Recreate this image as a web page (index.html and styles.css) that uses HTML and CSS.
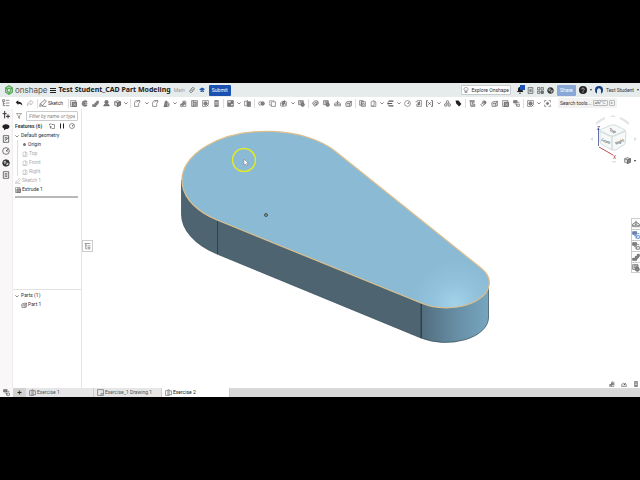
FILE: index.html
```html
<!DOCTYPE html>
<html lang="en">
<head>
    <meta charset="utf-8">
    <meta name="viewport" content="width=device-width, initial-scale=1.0">
    <title>Test Student_CAD Part Modeling</title>
    <link rel="stylesheet" href="styles.css">
</head>
<body>
<!-- shared icons, all drawn on a 12x12 grid -->
<svg class="defs" aria-hidden="true">
    <symbol id="tree" viewBox="0 0 12 12"><path d="M1 1h3v3H1zM2 4v6h3M2 7h3M6 2h5M6 6h5M6 10h5"/></symbol>
    <symbol id="outline" viewBox="0 0 12 12"><path d="M1 1h10M3 1v9h2M3 5h2M6 5h5M6 8h5M6 10h5"/></symbol>
    <symbol id="undo" viewBox="0 0 12 12"><path class="solid" d="M1 5l4-3v2c4 0 6 2 6 6-1-2-3-3-6-3v2z"/></symbol>
    <symbol id="redo" viewBox="0 0 12 12"><path d="M11 5L7 2v2C4 4 2 6 2 10c1-2 2-3 5-3v2z"/></symbol>
    <symbol id="pencil" viewBox="0 0 12 12"><path d="M1 11l1-4 7-6 2 2-6 7zM2 7l3 3M5 11h6"/></symbol>
    <symbol id="extrude" viewBox="0 0 12 12"><path class="pale" d="M4 4h7v7H4z"/><path d="M1 1h9v3M1 1v10h10V4H4v7M6 6h3v3H6z"/></symbol>
    <symbol id="revolve" viewBox="0 0 12 12"><path class="mid" d="M10 2C5 0 2 2 2 6s3 6 8 4V8C8 9 6 8 6 6s2-3 4-2z"/><path d="M6 6h5"/></symbol>
    <symbol id="sweep" viewBox="0 0 12 12"><path class="mid" d="M1 8h4V5h3V2h3v3l-2 3H7v3H1z"/></symbol>
    <symbol id="loft" viewBox="0 0 12 12"><path class="mid" d="M4 1h4l1 3-1 2 3 4H1l3-4-1-2z"/><path d="M2 9h8M4 4h4"/></symbol>
    <symbol id="cube" viewBox="0 0 12 12"><path class="pale" d="M1 3l5-2 5 2v6l-5 2-5-2z"/><path d="M1 3l5 2 5-2M6 5v6"/><path class="mid" d="M6 5l5-2v6l-5 2z"/></symbol>
    <symbol id="fillet" viewBox="0 0 12 12"><path d="M1 11V5c0-2 1-3 3-4h6v3C8 5 8 6 8 7v4zM4 4c0-1 2-2 6-3"/></symbol>
    <symbol id="sheetpage" viewBox="0 0 12 12"><path d="M1 1h10v10H1zM7 11V8h4"/></symbol>
    <symbol id="draft" viewBox="0 0 12 12"><path class="mid" d="M4 2h3v9H2z"/><path d="M7 5h3v6H1M8 8h3"/></symbol>
    <symbol id="rib" viewBox="0 0 12 12"><path d="M1 11V7h4V2h5v9zM5 7h5"/><path class="mid" d="M2 8l5-5 2 2-4 5z"/></symbol>
    <symbol id="shell" viewBox="0 0 12 12"><path class="pale" d="M1 1h10v10H1z"/><path d="M4 1v10M4 4h5v5H4M7 4v5"/></symbol>
    <symbol id="hole" viewBox="0 0 12 12"><path d="M1 1h10v7L8 11H1z"/><circle class="mid" cx="6" cy="6" r="3"/><path d="M8 8l3 3"/></symbol>
    <symbol id="thread" viewBox="0 0 12 12"><path class="mid" d="M3 1h6v10H3z"/><path class="light" d="M3 4h6M3 7h6"/></symbol>
    <symbol id="pattern" viewBox="0 0 12 12"><path class="pale" d="M1 1h10v10H1z"/><path class="mid" d="M2 5h4v4H2zM7 2h3v4H7z"/><path d="M2 10h9"/></symbol>
    <symbol id="mirror" viewBox="0 0 12 12"><path d="M1 2h4v8H1zM6 0v12"/><path class="mid" d="M7 3h4v8H7z"/></symbol>
    <symbol id="studio" viewBox="0 0 12 12"><path d="M1 3l4-1v9H1zM5 2l2-1v10H5M7 3h4v7H7"/></symbol>
    <symbol id="boolean" viewBox="0 0 12 12"><circle cx="4" cy="6" r="3"/><ellipse class="mid" cx="8" cy="6" rx="3" ry="3"/></symbol>
    <symbol id="split" viewBox="0 0 12 12"><path d="M1 4V1h7v2M1 4v5h3" stroke-dasharray="2 1"/><path d="M4 3h7v8H4z"/></symbol>
    <symbol id="transform" viewBox="0 0 12 12"><path d="M1 5l3-3 7 1v7l-7 1-3-1z"/><path class="mid" d="M3 5l5-4v4l-3 5z"/><path d="M7 6h2v3"/></symbol>
    <symbol id="delete" viewBox="0 0 12 12"><path class="pale" d="M1 1h8v7H1z"/><path d="M3 3h6M3 5h6"/><circle class="mid" cx="8" cy="8" r="3"/></symbol>
    <symbol id="face" viewBox="0 0 12 12"><path class="pale" d="M1 6c1-4 5-6 9-4l1 4-4 1-2 4z"/><path d="M3 8c1-3 3-4 7-4"/><circle class="mid" cx="8" cy="8" r="1"/></symbol>
    <symbol id="thicken" viewBox="0 0 12 12"><path d="M1 10V6l5-3 5 3v4zM6 1v6M4 5l2 2 2-2M1 8h10"/></symbol>
    <symbol id="surface" viewBox="0 0 12 12"><path class="pale" d="M1 6l2-3 8-1v8l-3 1H2z"/><path d="M3 6h5l3-4M8 6v5"/></symbol>
    <symbol id="copy" viewBox="0 0 12 12"><path d="M1 1h6l1 2H4v6H1zM4 3h7v8H4zM6 6h3v3H6z"/></symbol>
    <symbol id="plane" viewBox="0 0 12 12"><path d="M2 3l5-2v8l-5 2zM7 3h3v8H3"/></symbol>
    <symbol id="helix" viewBox="0 0 12 12"><path class="thick" d="M3 2h8M1 6h8M3 10h8"/><path d="M3 2L1 6l2 4"/></symbol>
    <symbol id="clock" viewBox="0 0 12 12"><circle cx="6" cy="6" r="5"/><path d="M6 6l3-3M6 6h3"/></symbol>
    <symbol id="derive" viewBox="0 0 12 12"><path d="M1 3h3V1h7v10H3V7"/><path class="mid" d="M5 5l3-2v5l-3 1z"/></symbol>
    <symbol id="variable" viewBox="0 0 12 12"><path d="M3 1H1v10h2M9 1h2v10H9M4 4l4 4M8 4L4 8" stroke-width="1.500"/></symbol>
    <symbol id="group" viewBox="0 0 12 12"><path class="pale" d="M4 2l2-1 2 1v3L6 6 4 5zM1 7l2-1 2 1v3l-2 1-2-1zM7 7l2-1 2 1v3l-2 1-2-1z"/></symbol>
    <symbol id="tag" viewBox="0 0 12 12"><path class="solid" d="M1 1h5l5 6-4 4-5-5z"/></symbol>
    <symbol id="sheet" viewBox="0 0 12 12"><path class="pale" d="M2 1h7v3H6v3h4v4H3z"/><path d="M3 3h5M4 9h5M1 2h2"/></symbol>
    <symbol id="flange" viewBox="0 0 12 12"><path d="M1 8l3 3 3-3-3-2zM4 6V3c1-2 4-2 6 0v3L7 8"/><circle class="mid" cx="8" cy="4" r="2"/></symbol>
    <symbol id="custom" viewBox="0 0 12 12"><circle cx="6" cy="6" r="2"/><path d="M1 4V1h3M8 1h3v3M11 8v3H8M4 11H1V8M6 4v4M4 6h4"/></symbol>
    <symbol id="caret" viewBox="0 0 12 12"><path class="thick" d="M1 4l5 5 5-5"/></symbol>
    <symbol id="chat" viewBox="0 0 12 12"><path class="solid" d="M6 2c7 0 7 7 0 7l-3 2V8C-1 7 0 2 6 2z"/></symbol>
    <symbol id="addpart" viewBox="0 0 12 12"><path d="M4 0v11M1 4h6M9 5v6M6 8h6" stroke-width="1.500"/></symbol>
    <symbol id="note" viewBox="0 0 12 12"><path d="M2 1h8v10H2zM4 4h4M4 6h3M4 9l6-5"/></symbol>
    <symbol id="globe" viewBox="0 0 12 12"><circle class="dark" cx="6" cy="6" r="5"/><path class="light" d="M3 4l2-1 1 2-2 2zM7 7l2-1v2l-2 1z"/></symbol>
    <symbol id="list" viewBox="0 0 12 12"><path d="M2 1h8v10H2zM4 4h4M4 6h4M4 8h4"/></symbol>
    <symbol id="funnel" viewBox="0 0 12 12"><path d="M1 1h10L7 6v5L5 10V6z"/></symbol>
    <symbol id="folder" viewBox="0 0 12 12"><path d="M1 5V2h4l1 1h5v8H5M3 6v5M1 8h5"/></symbol>
    <symbol id="pause" viewBox="0 0 12 12"><path class="solid" d="M2 1h2v10H2zM8 1h2v10H8z"/></symbol>
    <symbol id="link" viewBox="0 0 12 12"><path d="M5 7C2 4 8-1 10 2c2 2-1 4-2 5M7 5c3 3-3 8-5 5-2-2 1-4 2-5" stroke-width="1.500"/></symbol>
    <symbol id="cap" viewBox="0 0 12 12"><path class="royal" d="M0 5l6-4 6 3-5 4zM3 7l4 2 3-2v3H3z"/></symbol>
    <symbol id="bulb" viewBox="0 0 12 12"><path d="M4 8C0 5 2 1 6 1s6 4 2 7v3H4zM4 9h4M6 8V5"/></symbol>
    <symbol id="bell" viewBox="0 0 12 12"><path class="solid" d="M1 9l2-2V4c1-4 6-4 7 0v3l1 2zM4 10h4l-2 2z"/></symbol>
    <symbol id="apps" viewBox="0 0 12 12"><path d="M1 1h4v4H1zM7 1h4v4H7zM1 7h4v4H1z"/><path class="mid" d="M7 7h4v4H7z"/></symbol>
    <symbol id="help" viewBox="0 0 12 12"><circle class="solid" cx="6" cy="6" r="6"/><path class="light" d="M4 5c0-3 4-2 4 0L6 7M6 8v2"/></symbol>
    <symbol id="user" viewBox="0 0 12 12"><circle class="navy" cx="6" cy="6" r="6"/><path class="face" d="M3 12V7c0-5 6-5 6 0v5z"/></symbol>
    <symbol id="scale" viewBox="0 0 12 12"><path class="pale" d="M1 9c0-6 10-6 10 0v2H1z"/><path class="thick" d="M6 8l3-3"/></symbol>
    <symbol id="props" viewBox="0 0 12 12"><path class="mid" d="M1 1h6v4H1z"/><path d="M3 7h3v4M8 4h3M7 7h4v4H7z"/></symbol>
</svg>

<div class="app">
    <header class="topbar">
        <svg class="logo" viewBox="0 0 24 24"><path d="M12 2l8 5v10l-8 5-8-5V7z"/><path d="M12 7l4 3v5l-4 3-4-3v-5zM4 7l4 3M20 7l-4 3M12 18v4"/></svg>
        <span class="brand">onshape</span>
        <button class="menu" type="button" aria-label="Menu"><i></i><i></i><i></i></button>
        <h1>Test Student_CAD Part Modeling</h1>
        <span class="branch">Main</span>
        <svg class="icon"><use href="#link"/></svg>
        <svg class="icon"><use href="#cap"/></svg>
        <button class="submit" type="button">Submit</button>
        <div class="account">
            <button class="explore" type="button"><svg class="icon"><use href="#bulb"/></svg>Explore Onshape</button>
            <button class="bell" type="button" aria-label="Notifications"><svg class="icon"><use href="#bell"/></svg><span class="badge"></span></button>
            <svg class="icon"><use href="#list"/></svg>
            <svg class="icon"><use href="#apps"/></svg>
            <svg class="icon"><use href="#globe"/></svg>
            <button class="share" type="button">Share</button>
            <svg class="icon help"><use href="#help"/></svg>
            <span class="drop"></span>
            <svg class="icon help"><use href="#user"/></svg>
            <span class="user">Test Student</span>
            <span class="drop"></span>
        </div>
    </header>

    <div class="toolbar">
        <div class="history">
            <svg class="icon"><use href="#tree"/></svg>
            <svg class="icon undo"><use href="#undo"/></svg>
            <svg class="icon faint"><use href="#redo"/></svg>
            <i class="sep"></i>
            <button class="sketch" type="button"><svg class="icon"><use href="#pencil"/></svg>Sketch</button>
            <i class="sep last"></i>
        </div>
        <div class="tools">
            <svg class="icon"><use href="#extrude"/></svg>
            <svg class="icon"><use href="#revolve"/></svg>
            <svg class="icon"><use href="#sweep"/></svg>
            <svg class="icon"><use href="#loft"/></svg>
            <svg class="icon"><use href="#cube"/></svg>
            <svg class="caret"><use href="#caret"/></svg>
            <i class="sep"></i>
            <svg class="icon"><use href="#fillet"/></svg>
            <svg class="caret"><use href="#caret"/></svg>
            <svg class="icon"><use href="#fillet"/></svg>
            <svg class="icon"><use href="#draft"/></svg>
            <svg class="caret"><use href="#caret"/></svg>
            <svg class="icon"><use href="#rib"/></svg>
            <svg class="icon"><use href="#shell"/></svg>
            <svg class="icon"><use href="#hole"/></svg>
            <svg class="icon"><use href="#thread"/></svg>
            <i class="sep"></i>
            <svg class="icon"><use href="#pattern"/></svg>
            <svg class="caret"><use href="#caret"/></svg>
            <svg class="icon"><use href="#mirror"/></svg>
            <i class="sep"></i>
            <svg class="icon"><use href="#boolean"/></svg>
            <svg class="icon"><use href="#split"/></svg>
            <svg class="icon"><use href="#transform"/></svg>
            <svg class="caret"><use href="#caret"/></svg>
            <svg class="icon"><use href="#delete"/></svg>
            <i class="sep"></i>
            <svg class="icon"><use href="#face"/></svg>
            <svg class="icon"><use href="#delete"/></svg>
            <svg class="icon"><use href="#thicken"/></svg>
            <svg class="icon"><use href="#surface"/></svg>
            <i class="sep"></i>
            <svg class="icon"><use href="#copy"/></svg>
            <svg class="icon"><use href="#plane"/></svg>
            <svg class="caret"><use href="#caret"/></svg>
            <svg class="icon"><use href="#helix"/></svg>
            <svg class="caret"><use href="#caret"/></svg>
            <svg class="icon"><use href="#clock"/></svg>
            <svg class="icon"><use href="#derive"/></svg>
            <svg class="icon"><use href="#variable"/></svg>
            <svg class="caret"><use href="#caret"/></svg>
            <svg class="icon"><use href="#group"/></svg>
            <svg class="icon"><use href="#tag"/></svg>
            <i class="sep"></i>
            <svg class="icon"><use href="#sheet"/></svg>
            <svg class="icon"><use href="#flange"/></svg>
            <svg class="icon"><use href="#surface"/></svg>
            <svg class="icon"><use href="#extrude"/></svg>
            <svg class="icon"><use href="#props"/></svg>
            <i class="sep"></i>
            <svg class="icon"><use href="#hole"/></svg>
            <svg class="caret"><use href="#caret"/></svg>
            <svg class="icon"><use href="#custom"/></svg>
        </div>
        <button class="search" type="button">Search tools... <kbd>alt/⌥</kbd><kbd>c</kbd></button>
    </div>

    <div class="workspace">
        <nav class="rail">
            <svg class="icon"><use href="#addpart"/></svg>
            <svg class="icon"><use href="#chat"/></svg>
            <svg class="icon"><use href="#note"/></svg>
            <svg class="icon"><use href="#clock"/></svg>
            <svg class="icon"><use href="#globe"/></svg>
            <svg class="icon"><use href="#list"/></svg>
        </nav>
        <aside class="panel">
            <section class="features">
                <div class="filter">
                    <svg class="icon"><use href="#funnel"/></svg>
                    <input type="text" placeholder="Filter by name or type" aria-label="Filter by name or type">
                </div>
                <div class="heading">
                    <h2>Features (6)</h2>
                    <svg class="icon"><use href="#folder"/></svg>
                    <svg class="icon"><use href="#pause"/></svg>
                    <svg class="icon"><use href="#clock"/></svg>
                </div>
                <ul>
                    <li><svg class="caret"><use href="#caret"/></svg>Default geometry
                        <ul class="sub">
                            <li><i class="dot"></i>Origin</li>
                            <li class="off"><svg class="small"><use href="#plane"/></svg>Top</li>
                            <li class="off"><svg class="small"><use href="#plane"/></svg>Front</li>
                            <li class="off"><svg class="small"><use href="#plane"/></svg>Right</li>
                        </ul>
                    </li>
                    <li class="off"><svg class="small"><use href="#pencil"/></svg>Sketch 1</li>
                    <li><svg class="small"><use href="#extrude"/></svg>Extrude 1</li>
                </ul>
                <div class="rollback"></div>
            </section>
            <section class="parts">
                <ul>
                    <li><svg class="caret"><use href="#caret"/></svg>Parts (1)
                        <ul class="partlist">
                            <li><svg class="small"><use href="#surface"/></svg>Part 1</li>
                        </ul>
                    </li>
                </ul>
            </section>
        </aside>
        <main class="canvas">
            <svg class="model" viewBox="82 109 558 279">
                <defs>
                    <linearGradient id="side" gradientUnits="userSpaceOnUse" x1="421" y1="0" x2="489" y2="0">
                        <stop offset="0" stop-color="#526d7c"/>
                        <stop offset=".5" stop-color="#668da4"/>
                        <stop offset="1" stop-color="#77a6c0"/>
                    </linearGradient>
                    <radialGradient id="shine" gradientUnits="userSpaceOnUse" cx="455" cy="304" r="44">
                        <stop offset="0" stop-color="#a3d3eb"/>
                        <stop offset=".5" stop-color="#93c2dc"/>
                        <stop offset="1" stop-color="#8bbad4"/>
                    </radialGradient>
                </defs>
                <path fill="#4e6571" stroke="#304956" stroke-width=".7" d="M181.500 180v34A85 49 0 0 0 217 254L421 338V303L217 220z"/>
                <path fill="url(#side)" stroke="#304956" stroke-width=".7" d="M421 303v35A43 25 0 0 0 488.500 318V283z"/>
                <path class="top" fill="url(#shine)" d="M217 220A85 49 0 1 1 335 151L481 268A43 25 0 0 1 421 303z"/>
                <path stroke="#263b46" stroke-width=".8" d="M217.500 221v33M421.500 304v34"/>
                <circle cx="266" cy="215" r="1.500" fill="#899" stroke="#233" stroke-width=".7"/>
                <circle cx="244" cy="160" r="11.500" fill="none" stroke="#e0ea28" stroke-width="1.500"/>
                <path d="M244 159v6l1.500-1 1 2 1-.5-1-2h2z" fill="#fff" stroke="#567" stroke-width=".4"/>
            </svg>
            <button class="handle" type="button" aria-label="Feature list"><svg class="icon"><use href="#outline"/></svg></button>
            <svg class="viewcube" viewBox="590 112 50 56">
                <g fill="none" stroke="#e1e5e8" stroke-width="2"><path d="M596 124q4-4 9-6M620 118q5 2 9 6"/></g>
                <path fill="#dde2e5" d="M610 117l3-2 3 2zM590 139l3-2v4zM637 139l-3-2v4zM611 161l3 2 3-2z"/>
                <path fill="#f7f9f9" stroke="#d5dde0" d="M600 130l11-5h4l10 5 1 3-1 11-9 6h-4l-11-6-1-3z"/>
                <path fill="none" stroke="#d5dde0" stroke-width="1.500" d="M600 131l10 5h4l11-5M612 136v14"/>
                <path stroke="#6670a8" d="M598.500 128v18"/><path stroke="#b55" d="M599 147l14 8"/>
                <text class="axis" x="597" y="130" fill="#44a">Z</text><text class="axis" x="613" y="159" fill="#b33">X</text>
                <text x="609" y="131" transform="rotate(20 609 131)">Top</text>
                <text x="601" y="141" transform="rotate(20 601 141)">Front</text>
                <text x="616" y="145" transform="rotate(-25 616 145)">Right</text>
            </svg>
            <button class="display" type="button" aria-label="Display style"><svg class="icon"><use href="#cube"/></svg><span class="drop"></span></button>
            <div class="sidetabs">
                <button type="button" aria-label="Appearance"><svg class="icon"><use href="#thicken"/></svg></button>
                <button type="button" class="blue" aria-label="Configurations"><svg class="icon"><use href="#props"/></svg></button>
                <button type="button" aria-label="Tables"><svg class="icon"><use href="#props"/></svg></button>
                <button type="button" aria-label="Sheet metal"><svg class="icon"><use href="#sweep"/></svg></button>
                <button type="button" aria-label="Variables"><svg class="icon"><use href="#delete"/></svg></button>
            </div>
            <div class="measure">
                <svg class="small"><use href="#rib"/></svg>
                <svg class="small"><use href="#scale"/></svg>
                <svg class="small"><use href="#thread"/></svg>
            </div>
        </main>
    </div>

    <footer class="tabs">
        <button class="manager" type="button" aria-label="Tab manager"><svg class="icon"><use href="#props"/></svg></button>
        <button class="add" type="button" aria-label="Add tab">+</button>
        <a href="#ex1"><svg class="icon"><use href="#studio"/></svg>Exercise 1</a>
        <a href="#drawing1"><svg class="icon"><use href="#sheetpage"/></svg>Exercise_1 Drawing 1</a>
        <a href="#ex2" class="active"><svg class="icon"><use href="#studio"/></svg>Exercise 2</a>
    </footer>
</div>
</body>
</html>
```
FILE: styles.css
```css
*{
    margin: 0;
    padding: 0;
    box-sizing: border-box;
}
body{
    height: 100vh;
    padding: 83px 0;
    background: #000;
    color: #333;
    font: 5px/9px Roboto, "Liberation Sans", sans-serif;
    overflow: hidden;
}
button, input{
    font: inherit;
    color: inherit;
    border: 0;
    background: none;
}
button, a{
    display: flex;
    align-items: center;
    justify-content: center;
}
ul{
    list-style: none;
}
svg{
    display: block;
    flex: none;
}

/* icons */
.defs{
    position: absolute;
    width: 0;
    height: 0;
}
.icon{
    width: 8px;
    height: 8px;
}
.small{
    width: 6px;
    height: 6px;
}
.caret{
    width: 4px;
    height: 4px;
}
.icon, .small, .caret{
    fill: none;
    stroke: #555;
    stroke-width: 1;
}
.thick{ stroke-width: 2; }
.solid{ fill: #222; stroke: none; }
.royal{ fill: #2057b3; stroke: none; }
.dark{ fill: #333; }
.mid{ fill: #888; }
.pale{ fill: #ddd; }
.light{ fill: none; stroke: #fff; }
.navy{ fill: #153f83; stroke: none; }
.face{ fill: #e6ebec; stroke: none; }
.faint{ opacity: .5; }
.sep{
    width: 1px;
    height: 9px;
    background: #ddd;
}
.drop{
    border: 1px solid transparent;
    border-top: 2px solid #333;
    border-bottom: 0;
}

.app{
    height: 100%;
    display: flex;
    flex-direction: column;
    background: #fff;
}

/* top bar */
.topbar{
    flex: none;
    display: flex;
    align-items: center;
    height: 14px;
    padding: 0 1px 0 4px;
    background: #e6ebec;
    white-space: nowrap;
}
.logo{
    width: 10px;
    height: 10px;
    fill: none;
    stroke: #57a957;
    stroke-width: 3;
}
.brand{
    margin-left: 1px;
    color: #555;
    font: 8px/12px Inter, sans-serif;
}
.menu{
    flex-direction: column;
    gap: 1px;
    width: 6px;
    margin: 0 3px 0 2px;
}
.menu i{
    width: 6px;
    height: 1px;
    background: #222;
}
h1{
    color: #222;
    font: bold 7px/12px "Noto Sans", sans-serif;
}
.branch{
    margin: 0 4px 0 3px;
    color: #999;
}
.topbar > .icon{
    width: 6px;
    height: 6px;
    margin-right: 4px;
}
.submit, .share{
    height: 11px;
    border-radius: 1px;
    background: #1b51b0;
    color: #fff;
}
.submit{
    width: 22px;
}
.share{
    width: 19px;
    background: #89a8d6;
}
.account{
    display: flex;
    align-items: center;
    gap: 3px;
    margin-left: auto;
}
.account > .icon{
    width: 7px;
    height: 7px;
    stroke: #333;
}
.account > .help{
    width: 8px;
    height: 8px;
}
.explore{
    gap: 2px;
    height: 10px;
    margin-right: 2px;
    padding: 0 1px;
    background: #fff;
    border: 1px solid #c8cccd;
    border-radius: 1px;
}
.explore .icon{
    width: 6px;
    height: 6px;
}
.bell{
    position: relative;
}
.badge{
    position: absolute;
    top: -1px;
    right: -1px;
    width: 5px;
    height: 5px;
    background: #1b51b0;
}

/* toolbar */
.toolbar{
    flex: none;
    display: flex;
    align-items: center;
    height: 12px;
    padding-left: 2px;
}
.history{
    display: flex;
    align-items: center;
    gap: 3px;
    width: 67px;
}
.history .undo{
    margin-left: 2px;
}
.history .sketch{
    gap: 1px;
    margin-left: -2px;
}
.history .last{
    margin-left: auto;
}
.tools{
    flex: 0 1 484px;
    display: flex;
    align-items: center;
    justify-content: space-between;
}
.tools .icon{
    width: 9px;
    height: 9px;
    padding: 1px;
}
.search{
    gap: 1px;
    height: 10px;
    margin-left: 5px;
    padding: 0 2px;
    background: #f2f2f2;
    white-space: nowrap;
}
kbd{
    padding: 0 1px;
    border: 1px solid #bbb;
    border-radius: 1px;
    font: 4px/4px "Noto Sans", sans-serif;
}

/* left side */
.workspace{
    flex: 1;
    min-height: 0;
    display: flex;
}
.rail{
    width: 13px;
    display: flex;
    flex-direction: column;
    align-items: center;
    gap: 4px;
    padding-top: 2px;
    background: #f9f7f7;
    border-right: 1px solid #eee;
}
.rail .icon{
    stroke: #333;
}
.panel{
    width: 69px;
    display: flex;
    flex-direction: column;
    border-right: 1px solid #e6e6e6;
}
.features{
    flex: 13 0 0;
    padding: 2px 3px 0 2px;
}
.parts{
    flex: 7 0 0;
    padding: 1px 2px;
    border-top: 1px solid #e2e2e2;
}
.filter{
    display: flex;
    align-items: center;
    gap: 4px;
    padding-left: 1px;
}
.filter .icon{
    width: 6px;
    height: 6px;
}
.filter input{
    flex: 1;
    min-width: 0;
    height: 10px;
    padding: 0 2px;
    border: 1px solid #ccc;
    border-radius: 1px;
}
.filter input::placeholder{
    color: #888;
    font-style: italic;
}
.heading{
    display: flex;
    align-items: center;
    gap: 4px;
    height: 10px;
}
.heading .icon{
    width: 6px;
    height: 6px;
    stroke: #333;
}
h2{
    width: 30px;
    font-size: 5px;
    font-weight: 600;
    white-space: nowrap;
}
li{
    min-height: 9px;
}
li > svg, .dot{
    display: inline-block;
    margin-right: 2px;
    vertical-align: middle;
}
li > .small{
    margin-right: 1px;
}
.sub{
    margin-left: 2px;
    padding-left: 4px;
    border-left: 1px solid #ddd;
}
.dot{
    width: 3px;
    height: 3px;
    margin: 0 2px 0 1px;
    border-radius: 50%;
    background: #777;
}
.off{
    color: #aaa;
}
.off svg{
    opacity: .5;
}
.partlist{
    padding-left: 6px;
}
.rollback{
    height: 2px;
    margin-top: 2px;
    background: #b8b8b8;
}

/* drawing area */
.canvas{
    position: relative;
    flex: 1;
    min-width: 0;
}
.model{
    width: 100%;
    height: 100%;
}
.top{
    stroke: #dcbf8c;
    stroke-width: 1.2;
}
.handle{
    position: absolute;
    top: 131px;
    left: 0;
    width: 11px;
    height: 12px;
    border: 1px solid #ccc;
    background: #fff;
}
.handle .icon{
    width: 7px;
    height: 7px;
}
.viewcube{
    position: absolute;
    top: 3px;
    right: 0;
    width: 50px;
    height: 56px;
    fill: #333;
    font-size: 4px;
}
.axis{
    font-size: 5px;
}
.display{
    position: absolute;
    top: 48px;
    right: 4px;
    gap: 3px;
}
.display .icon{
    width: 7px;
    height: 7px;
}
.sidetabs{
    position: absolute;
    top: 109px;
    right: 0;
    width: 9px;
}
.sidetabs button{
    width: 9px;
    height: 11px;
    border: 1px solid #ccc;
    border-right: 0;
    border-bottom: 0;
    background: #fff;
}
.sidetabs button:last-child{
    border-bottom: 1px solid #ccc;
}
.sidetabs .blue .icon{
    stroke: #2d67bb;
}
.measure{
    position: absolute;
    right: 1px;
    bottom: 1px;
    display: flex;
    gap: 6px;
}

/* tabs */
.tabs{
    flex: none;
    display: flex;
    height: 9px;
    background: #d9d9d9;
}
.manager{
    width: 13px;
    background: #f9f7f7;
}
.add{
    width: 13px;
    background: #d2d2d2;
    font-size: 8px;
    font-weight: 600;
}
.tabs a{
    justify-content: flex-start;
    gap: 1px;
    width: 68px;
    padding-left: 3px;
    border-right: 1px solid #ccc;
    background: #e6e6e6;
    color: #555;
    text-decoration: none;
    white-space: nowrap;
}
.tabs .icon{
    width: 7px;
    height: 7px;
}
.tabs .active{
    background: #fff;
    color: #222;
}
```
